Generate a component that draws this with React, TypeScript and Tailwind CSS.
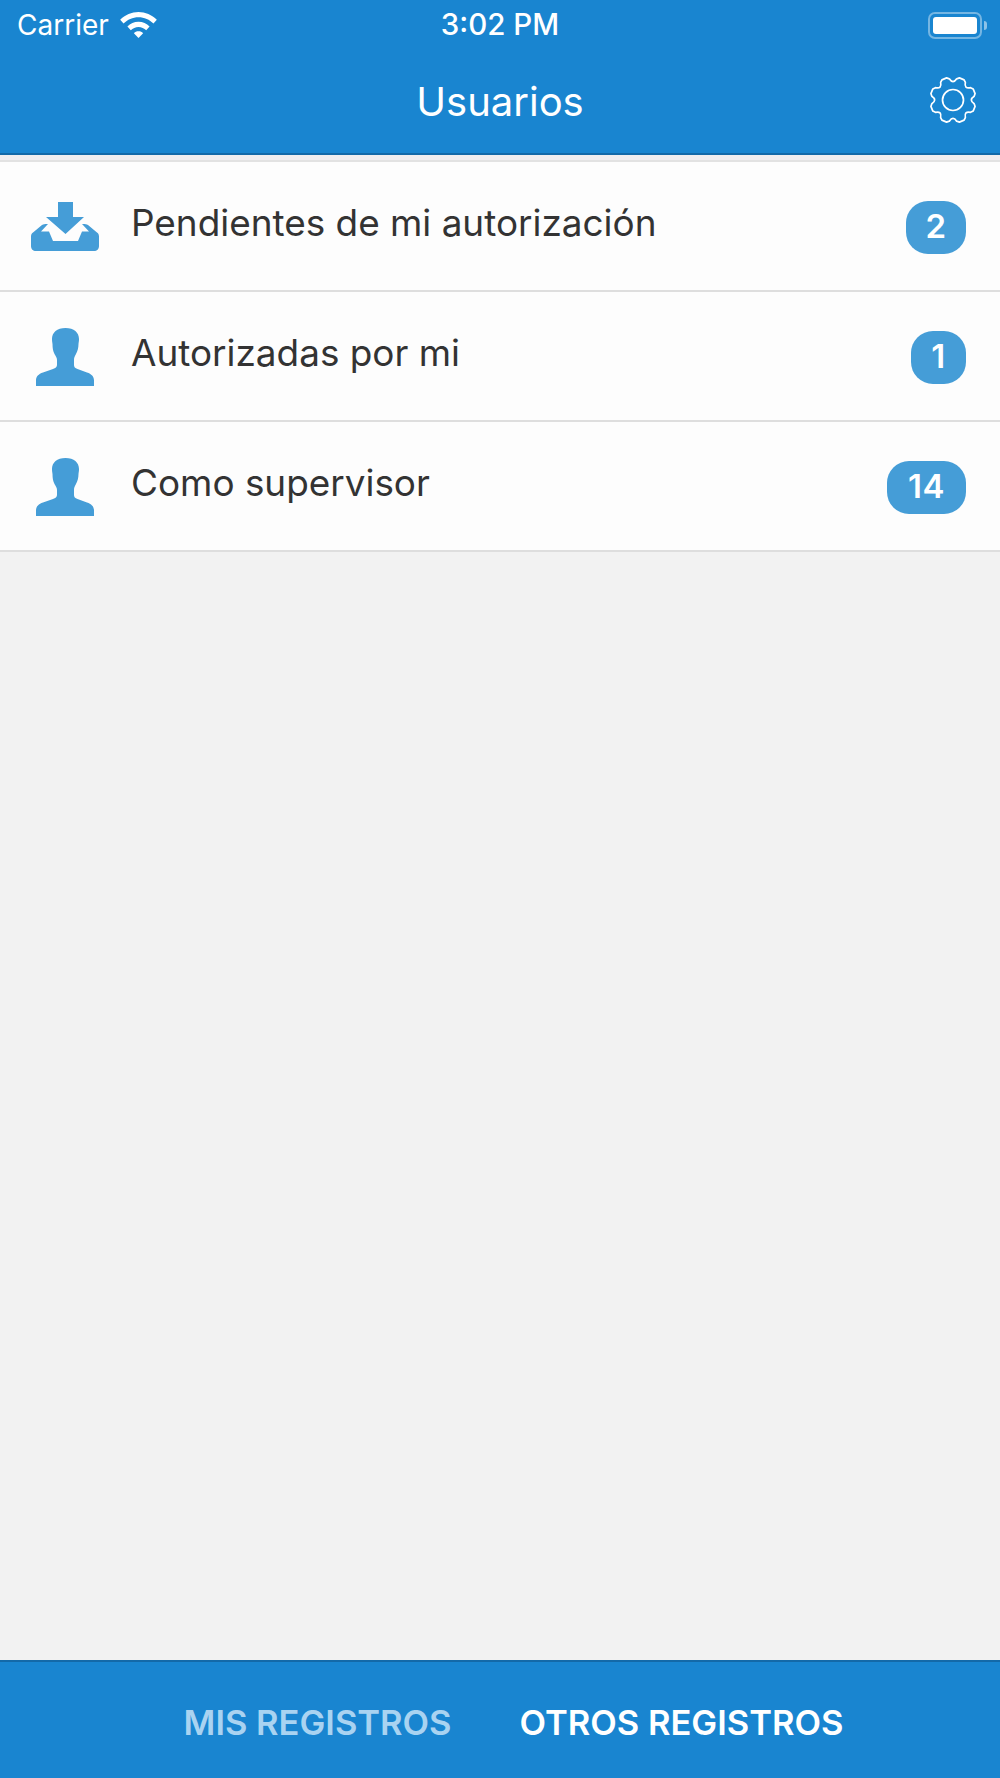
import React from 'react';

interface RowData {
  label: string;
  count: number;
  icon: 'inbox' | 'user';
  badgeWidth: string;
}

const rows: RowData[] = [
  { label: 'Pendientes de mi autorización', count: 2, icon: 'inbox', badgeWidth: 'w-[60px]' },
  { label: 'Autorizadas por mi', count: 1, icon: 'user', badgeWidth: 'w-[55px]' },
  { label: 'Como supervisor', count: 14, icon: 'user', badgeWidth: 'w-[79px]' },
];

function InboxIcon() {
  return (
    <svg width="68" height="49" viewBox="0 0 68 49" fill="#459dd7">
      <path d="M27 0H42V15H53L34.500 32L15 15H27Z" />
      <path d="M11 23C12.500 22 14 22 15.500 22H17L10 29.500H18L22 39H47L51 29.500H58L51 22H52.500C54 22 55.500 22 57 23L66 30.500C67.500 31.500 68 33 68 34.500V44C68 47 66 49 63 49H5C2 49 0 47 0 44V34.500C0 33 .5 31.500 2 30.500Z" />
    </svg>
  );
}

function UserIcon() {
  return (
    <svg width="58" height="58" viewBox="0 0 58 58" fill="#459dd7">
      <path d="M29.500 0C38 0 43 4.500 43 11C43 13 42.700 14.500 42.500 16C42.500 20 41.500 23 40 26C38.500 28.500 38 30 38 32V37C38 39 39 40 41.500 41L51 44.500C55.500 46 58 48.500 58 52.500V58H0V52.500C0 48.500 2.500 46 7 44.500L17 41C19.500 40 21 39 21 37V32C21 30 20 28.500 18.500 26C17 23 16.500 20 16.500 16C16.300 14.500 16 13 16 11C16 4.500 21 0 29.500 0Z" />
    </svg>
  );
}

function GearIcon() {
  // eight-tooth outline gear from the nav bar, valley at 12 o'clock
  const teeth = 8;
  const step = (Math.PI * 2) / teeth;
  const pt = (r: number, t: number) =>
    `${(24 + r * Math.cos(t)).toFixed(2)} ${(24 + r * Math.sin(t)).toFixed(2)}`;
  const parts: string[] = [];
  for (let i = 0; i < teeth; i++) {
    const a = i * step - Math.PI / 2 + step / 2;
    if (i === 0) parts.push(`M${pt(21.5, a - step * 0.28)}`);
    parts.push(`L${pt(23, a - step * 0.14)}`);
    parts.push(`L${pt(23, a + step * 0.14)}`);
    parts.push(`L${pt(21.5, a + step * 0.28)}`);
    parts.push(`Q${pt(15.5, a + step * 0.5)} ${pt(21.5, a + step * 0.72)}`);
  }
  return (
    <svg width="48" height="48" viewBox="0 0 48 48" fill="none" stroke="white" strokeWidth="1.700">
      <path d={parts.join(' ') + 'Z'} strokeLinejoin="round" />
      <circle cx="24" cy="24" r="10.500" />
    </svg>
  );
}

function WifiIcon() {
  return (
    <svg width="37" height="27" viewBox="0 0 38 28" fill="white">
      <path d="M19 0C26 0 33 3 38 8L34.500 12C30.500 8 25 5.500 19 5.500C13 5.500 7.500 8 3.500 12L0 8C5 3 12 0 19 0Z" />
      <path d="M19 10C23.500 10 27.500 12 30.500 15L27 19C25 17 22 15.500 19 15.500C16 15.500 13 17 11 19L7.500 15C10.500 12 14.500 10 19 10Z" />
      <path d="M19 20C21 20 22.500 20.700 23.800 22L19 27L14.200 22C15.500 20.700 17 20 19 20Z" />
    </svg>
  );
}

function Battery() {
  return (
    <div className="flex items-center gap-[2px] -mr-[4px]">
      <div className="w-[54px] h-[27px] rounded-[7px] border-2 border-white/40 p-[3px]">
        <div className="w-full h-full rounded-[3px] bg-white" />
      </div>
      <div className="w-[3px] h-[9px] rounded-r-full bg-white/50" />
    </div>
  );
}

function ListRow({ row }: { row: RowData }) {
  return (
    <div className="flex items-center h-[130px] border-b-2 border-[#dedede] bg-[#fdfdfd] pl-[31px] pr-[34px]">
      <div className="w-[68px] flex justify-center shrink-0 mt-[1px]">
        {row.icon === 'inbox' ? <InboxIcon /> : <UserIcon />}
      </div>
      <span className="ml-[32px] flex-1 text-[36.9px] leading-none text-[#333333] mb-[5px]">{row.label}</span>
      <span className={`${row.badgeWidth} h-[53px] mt-[2px] rounded-[22px] bg-[#459dd7] text-white text-[33px] tracking-[0.5px] font-semibold flex items-center justify-center`}>
        {row.count}
      </span>
    </div>
  );
}

export default function App() {
  return (
    <div className="w-[1000px] h-[1778px] flex flex-col bg-[#f2f2f2] font-['Inter','Liberation_Sans',sans-serif] overflow-hidden">
      {/* status bar + nav bar */}
      <div className="h-[155px] shrink-0 bg-[#1985d0] border-b-2 border-[#1369a8] text-white">
        <div className="h-[50px] flex items-center pl-[17px] pr-[17px]">
          <div className="flex-1 flex items-center gap-[11px]">
            <span className="text-[28px] leading-none">Carrier</span>
            <WifiIcon />
          </div>
          <span className="text-[29.500px] font-medium leading-none">3:02 PM</span>
          <div className="flex-1 flex justify-end">
            <Battery />
          </div>
        </div>
        <div className="relative h-[103px] flex items-center justify-center">
          <span className="text-[40px] leading-none">Usuarios</span>
          <div className="absolute right-[23px] top-[26px]">
            <GearIcon />
          </div>
        </div>
      </div>

      <div className="h-[7px] shrink-0 bg-[#f0eef0] border-b-2 border-[#e2e2e2]" />

      <div className="shrink-0">
        {rows.map((row) => (
          <ListRow key={row.label} row={row} />
        ))}
      </div>

      <div className="flex-1" />

      {/* bottom tabs */}
      <div className="h-[118px] shrink-0 bg-[#1985d0] border-t-2 border-[#1369a8] flex items-center justify-center gap-[68px] text-[34.500px] font-semibold pt-[6px] pl-[27px]">
        <span className="text-[#a9d3f1]">MIS REGISTROS</span>
        <span className="text-white">OTROS REGISTROS</span>
      </div>
    </div>
  );
}
